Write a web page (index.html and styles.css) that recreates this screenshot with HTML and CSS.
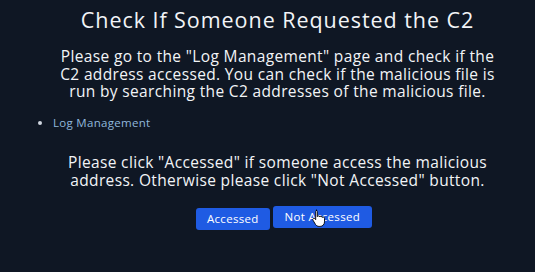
FILE: index.html
```html
<!DOCTYPE html>
<html>
<head>
<meta charset="utf-8">
<link rel="stylesheet" href="styles.css">
</head>
<body>
<main class="page">
  <h1 class="title">Check If Someone Requested the C2</h1>
  <p class="lead">Please go to the "Log Management" page and check if the C2 address accessed. You can check if the malicious file is run by searching the C2 addresses of the malicious file.</p>
  <ul class="links">
    <li><a class="link" href="#">Log Management</a></li>
  </ul>
  <p class="note">Please click "Accessed" if someone access the malicious address. Otherwise please click "Not Accessed" button.</p>
  <div class="actions">
    <button class="btn">Accessed</button>
    <button class="btn btn-hover">Not Accessed
      <svg class="cursor" width="14" height="18" viewBox="0 0 14 18"><path d="M4 1.2c.8 0 1.3.6 1.3 1.3v5.2c.2-.5.7-.8 1.2-.8.7 0 1.2.5 1.3 1.1.2-.4.6-.7 1.1-.7.7 0 1.2.5 1.3 1.2.2-.3.6-.5 1-.5.8 0 1.3.6 1.3 1.4v3.4c0 2.6-1.8 4.6-4.4 4.6H7.1c-1.5 0-2.6-.6-3.5-1.8L1 11.2c-.4-.6-.3-1.3.3-1.7.5-.4 1.2-.3 1.600.2l.8 1V2.5c0-.7.5-1.3 1.3-1.3z" fill="#fff" stroke="#000" stroke-width="0.9"/></svg>
    </button>
  </div>
</main>
</body>
</html>
```

FILE: styles.css
```css
html, body {
  margin: 0;
  padding: 0;
  background: #0f1724;
}
body {
  font-family: "Open Sans", "Noto Sans", sans-serif;
  color: #f2f4f7;
  width: 535px;
  height: 272px;
  overflow: hidden;
}
.page {
  padding: 6px 0 0 20px;
  display: flex;
  flex-direction: column;
  align-items: center;
}
.title {
  margin: 0;
  font-size: 21.5px;
  font-weight: 500;
  line-height: 28px;
  letter-spacing: 0.95px;
  text-align: center;
}
.lead {
  margin: 14px 0 0 0;
  width: 446px;
  font-size: 15.5px;
  font-weight: 500;
  line-height: 17.5px;
  letter-spacing: 0.35px;
  text-align: center;
}
.links {
  align-self: flex-start;
  margin: 14px 0 0 0;
  padding-left: 33px;
  font-size: 11.5px;
  font-weight: 500;
  line-height: 16px;
  letter-spacing: 0.3px;
}
.links li::marker {
  color: #cfd6e0;
}
.link {
  color: #8fb7dc;
  text-decoration: none;
}
.note {
  margin: 22px 0 0 0;
  width: 430px;
  font-size: 15.5px;
  font-weight: 500;
  line-height: 18px;
  letter-spacing: 0.35px;
  text-align: center;
}
.actions {
  display: flex;
  gap: 3px;
  margin-top: 17px;
  padding-left: 13px;
  align-items: flex-start;
}
.btn {
  position: relative;
  font-family: inherit;
  font-size: 11.5px;
  font-weight: 500;
  letter-spacing: 0.3px;
  color: #ffffff;
  background: #1f5be3;
  border: none;
  border-radius: 3px;
  padding: 0 11px;
  height: 22px;
  margin-top: 2px;
}
.btn-hover {
  margin-top: 0;
  padding: 0 12px;
}
.cursor {
  position: absolute;
  left: 39px;
  top: 3px;
}
```
